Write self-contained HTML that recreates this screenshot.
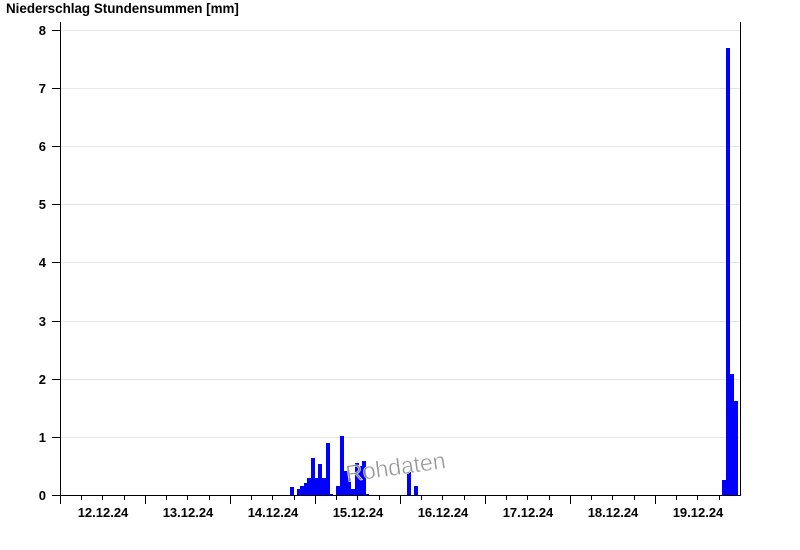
<!DOCTYPE html>
<html><head><meta charset="utf-8"><style>
html,body{margin:0;padding:0;background:#fff;width:800px;height:550px;overflow:hidden}
svg{display:block}
text{font-family:"Liberation Sans",Arial,sans-serif;font-weight:bold;font-size:13px;fill:#000}
</style></head><body>
<svg width="800" height="550" viewBox="0 0 800 550" xmlns="http://www.w3.org/2000/svg">
<text x="6" y="13" style="font-size:13.4px">Niederschlag Stundensummen [mm]</text>
<g stroke="#e6e6e6" stroke-width="1">
<line x1="60" y1="30.5" x2="740" y2="30.5"/>
<line x1="60" y1="88.5" x2="740" y2="88.5"/>
<line x1="60" y1="146.5" x2="740" y2="146.5"/>
<line x1="60" y1="204.5" x2="740" y2="204.5"/>
<line x1="60" y1="262.5" x2="740" y2="262.5"/>
<line x1="60" y1="321.5" x2="740" y2="321.5"/>
<line x1="60" y1="379.5" x2="740" y2="379.5"/>
<line x1="60" y1="437.5" x2="740" y2="437.5"/>
</g>
<g fill="#0000ff">
<rect x="290" y="487" width="4" height="8"/>
<rect x="297" y="489" width="4" height="6"/>
<rect x="300" y="486" width="4" height="9"/>
<rect x="304" y="483" width="4" height="12"/>
<rect x="307" y="478" width="4" height="17"/>
<rect x="311" y="458" width="4" height="37"/>
<rect x="315" y="478" width="4" height="17"/>
<rect x="318" y="464" width="4" height="31"/>
<rect x="322" y="478" width="4" height="17"/>
<rect x="326" y="443" width="4" height="52"/>
<rect x="330" y="494" width="3" height="1"/>
<rect x="336" y="486" width="4" height="9"/>
<rect x="340" y="436" width="4" height="59"/>
<rect x="344" y="471" width="4" height="24"/>
<rect x="347" y="478" width="4" height="17"/>
<rect x="351" y="489" width="4" height="6"/>
<rect x="355" y="463" width="4" height="32"/>
<rect x="358" y="466" width="4" height="29"/>
<rect x="362" y="461" width="4" height="34"/>
<rect x="366" y="494" width="3" height="1"/>
<rect x="407" y="472" width="4" height="23"/>
<rect x="414" y="486" width="4" height="9"/>
<rect x="722" y="480" width="4" height="15"/>
<rect x="726" y="48" width="4" height="447"/>
<rect x="730" y="374" width="4" height="121"/>
<rect x="734" y="401" width="4" height="94"/>
</g>
<text transform="translate(347,482) rotate(-8)" style="font-weight:normal;font-size:23.5px;fill:#8c8c8c;fill-opacity:0.9;stroke:#fff;stroke-width:0.5;letter-spacing:-0.2px">Rohdaten</text>
<g stroke="#000" stroke-width="1" fill="none">
<line x1="60.5" y1="22" x2="60.5" y2="495"/>
<line x1="740.5" y1="22" x2="740.5" y2="495"/>
<line x1="60" y1="495.5" x2="741" y2="495.5"/>
<path d="M52 30.5h8M52 88.5h8M52 146.5h8M52 204.5h8M52 262.5h8M52 321.5h8M52 379.5h8M52 437.5h8M52 495.5h8"/>
<path d="M60.5 495v9M145.5 495v9M230.5 495v9M315.5 495v9M400.5 495v9M485.5 495v9M570.5 495v9M655.5 495v9"/>
<path d="M81.5 495v5M102.5 495v5M124.5 495v5M166.5 495v5M187.5 495v5M209.5 495v5M251.5 495v5M272.5 495v5M294.5 495v5M336.5 495v5M357.5 495v5M379.5 495v5M421.5 495v5M442.5 495v5M464.5 495v5M506.5 495v5M527.5 495v5M549.5 495v5M591.5 495v5M612.5 495v5M634.5 495v5M676.5 495v5M697.5 495v5M719.5 495v5"/>
</g>
<g text-anchor="end">
<text x="46" y="35">8</text><text x="46" y="93">7</text><text x="46" y="151">6</text><text x="46" y="209">5</text>
<text x="46" y="267">4</text><text x="46" y="326">3</text><text x="46" y="384">2</text><text x="46" y="442">1</text><text x="46" y="500">0</text>
</g>
<g text-anchor="middle">
<text x="103" y="517">12.12.24</text><text x="188" y="517">13.12.24</text><text x="273" y="517">14.12.24</text>
<text x="358" y="517">15.12.24</text><text x="443" y="517">16.12.24</text><text x="528" y="517">17.12.24</text>
<text x="613" y="517">18.12.24</text><text x="698" y="517">19.12.24</text>
</g>
</svg>
</body></html>
